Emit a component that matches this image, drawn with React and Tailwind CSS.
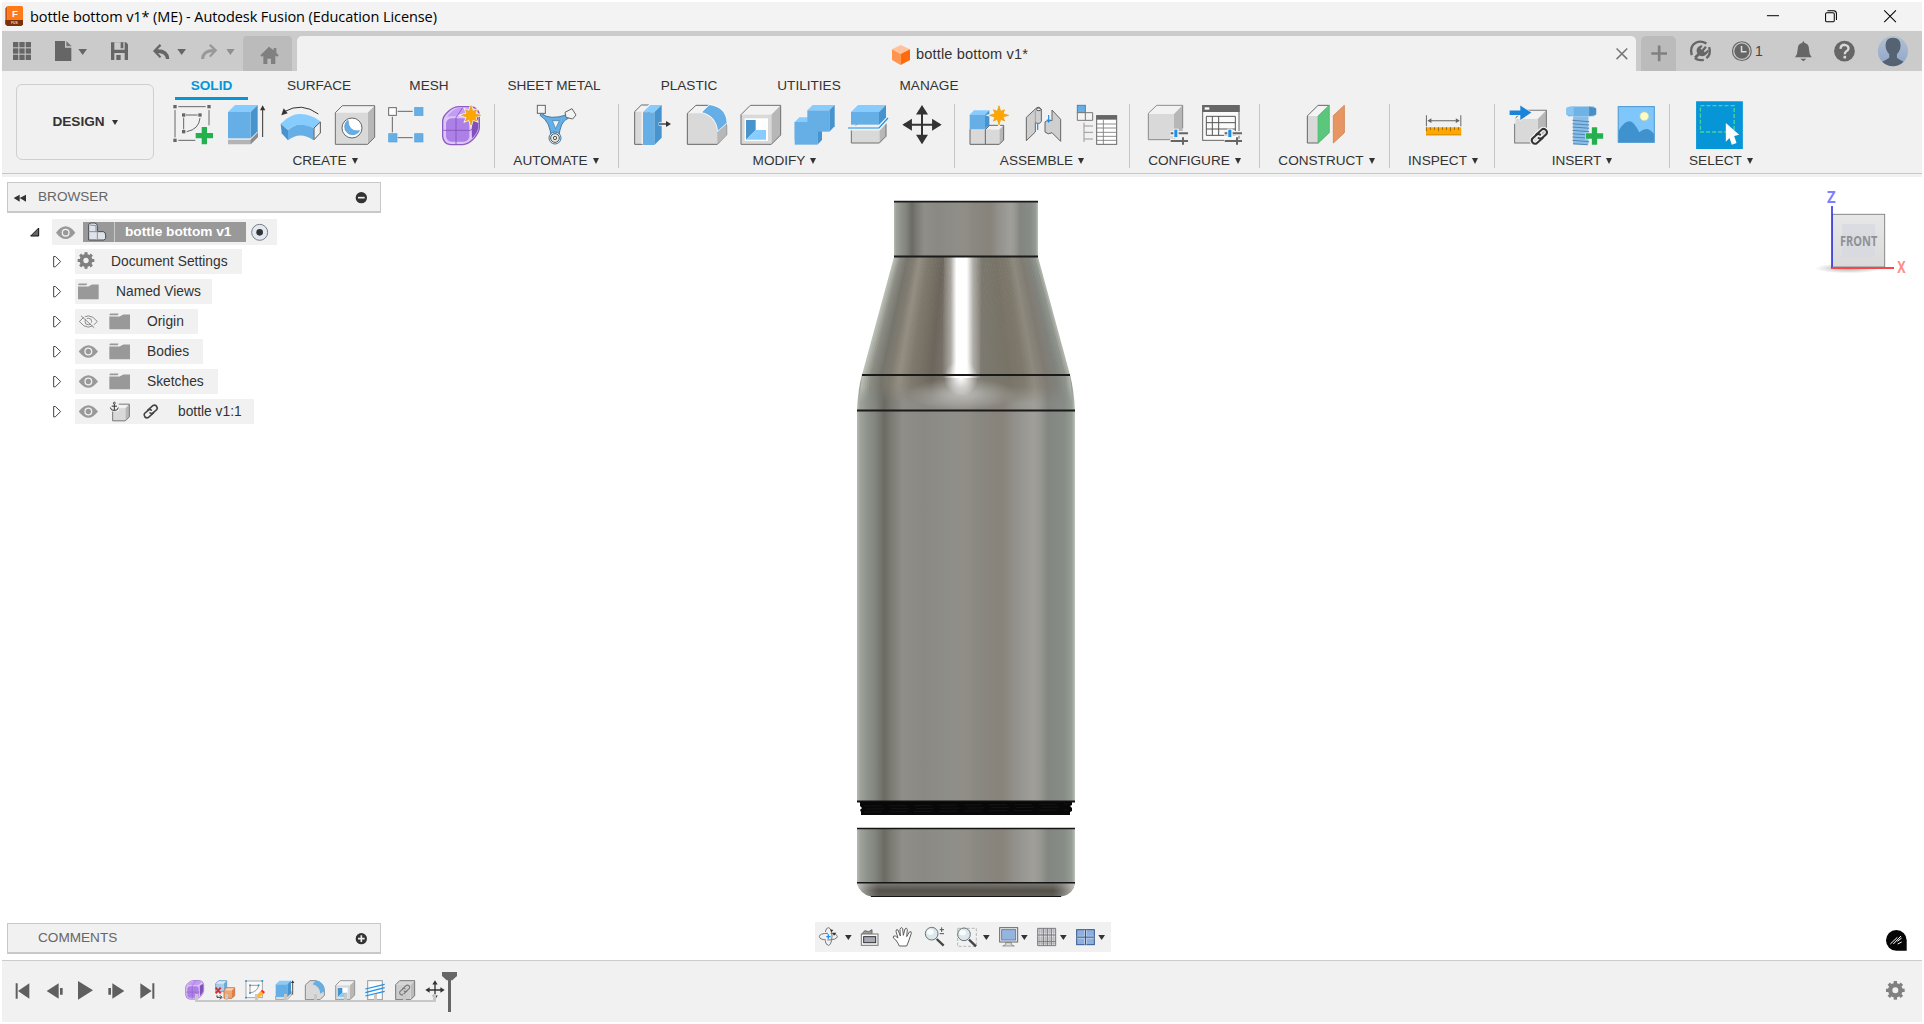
import React from "react";

// Drawing grids: [origin x, origin y, units per pixel]
const A = [0, 0, 3];
const B = [480, 60, 3];
const C = [940, 60, 3];
const D = [1400, 0, 2.9924];
const E = [0, 175, 3];
const G = [840, 780, 3];
const H = [0, 910, 3];
const I = [1780, 180, 3];
const J = [1820, 910, 3];
const K = [800, 910, 3];
const L = [870, 30, 3];

function Art({ g, x, y, w, h, className = "", children }) {
  const [ox, oy, s] = g;
  return (
    <svg width={w} height={h} viewBox={`${(x - ox) * s} ${(y - oy) * s} ${w * s} ${h * s}`} className={"block shrink-0 " + className} fill="none">
      {children}
    </svg>
  );
}

const BLUE = ["#65afe6", "#87ccff", "#4693cd"];
const GREY = ["#d9d9d9", "#f2f2f2", "#b7b7b7"];

// Oblique box: front face w x h, depth d
function Cube({ x, y, w, h, d, c = GREY, line, sw = 3 }) {
  return (
    <g strokeLinejoin="round">
      <path d={`M${x} ${y + d}L${x + d} ${y}H${x + w + d}L${x + w} ${y + d}Z`} fill={c[1]} />
      <path d={`M${x + w} ${y + d}L${x + w + d} ${y}V${y + h}L${x + w} ${y + h + d}Z`} fill={c[2]} />
      <path d={`M${x} ${y + d}h${w}v${h}h${-w}z`} fill={c[0]} />
      {line && <path d={`M${x} ${y + d}L${x + d} ${y}H${x + w + d}V${y + h}L${x + w} ${y + h + d}H${x}Z`} stroke={line} strokeWidth={sw} />}
    </g>
  );
}

function Star({ cx, cy, r }) {
  const pts = Array.from({ length: 16 }, (_, i) => {
    const a = (i * Math.PI) / 8 - Math.PI / 2;
    const q = i % 2 ? r * 0.45 : i % 4 ? r * 0.82 : r;
    return `${cx + q * Math.cos(a)},${cy + q * Math.sin(a)}`;
  }).join(" ");
  return (
    <g>
      <polygon points={pts} fill="#f4f1ea" stroke="#f4f1ea" strokeWidth="7" />
      <polygon points={pts} fill="#ffa600" stroke="#e59a10" strokeWidth="2" />
    </g>
  );
}

function Gear({ cx, cy, r, fill }) {
  return (
    <g>
      {Array.from({ length: 8 }, (_, i) => (
        <rect key={i} x={cx - r * 0.18} y={cy - r} width={r * 0.36} height={r * 0.5} fill={fill} transform={`rotate(${i * 45} ${cx} ${cy})`} />
      ))}
      <circle cx={cx} cy={cy} r={r * 0.55} stroke={fill} strokeWidth={r * 0.46} />
    </g>
  );
}

const Plus = ({ x, y }) => (
  <path d={`M${x - 8} ${y - 26}h16v18h18v16h-18v18h-16v-18h-18v-16h18z`} fill="#24b04f" stroke="#f5f5f5" strokeWidth="3" paintOrder="stroke" />
);

const Sq = ({ x, y, s = 10, f = "#666" }) => <rect x={x - s / 2} y={y - s / 2} width={s} height={s} fill={f} />;

const Chain = ({ x, y, s = 1, c = "#333", w = 6 }) => (
  <g transform={`translate(${x} ${y}) scale(${s}) rotate(-42)`} stroke={c} strokeWidth={w} strokeLinecap="round">
    <path d="M4 10H-20A10 10 0 0 1 -20 -9H-4A9 9 0 0 1 5 -2" />
    <path d="M-4 -10H20A10 10 0 0 1 20 9H4A9 9 0 0 1 -5 2" />
  </g>
);

const MoveArrows = ({ x, y, r, a, t }) => (
  <g fill="#333">
    <path d={`M${x} ${y - r + 5}V${y + r - 5}M${x - r + 5} ${y}H${x + r - 5}`} stroke="#333" strokeWidth={t} />
    {[0, 90, 180, 270].map((d) => (
      <path key={d} d={`M${x} ${y - r}l${a} ${a * 1.6}h${-2 * a}z`} transform={`rotate(${d} ${x} ${y})`} />
    ))}
  </g>
);

const Purple = ({ x, y, w }) => (
  <g transform={`translate(${x} ${y}) scale(${w / 110})`}>
    <path d="M0 42Q2 28 16 16Q32 2 46 1H84Q106 3 110 24V66Q108 80 92 98Q76 114 60 115H24Q2 112 0 90Z" fill="#dcc6f7" stroke="#8e5bc4" strokeWidth="4" />
    <path d="M12 32Q30 6 52 4H86Q98 8 90 20Q80 32 66 30H30Q18 30 12 32Z" fill="#c49cf5" />
    <path d="M86 34Q100 20 107 26V64Q104 80 88 96Z" fill="#8150b8" />
    <rect x="10" y="36" width="70" height="70" rx="16" fill="#ad80e8" />
    <path d="M2 72H84L108 50M40 114V34L60 4" stroke="#8153b8" strokeWidth="2.500" />
  </g>
);

const Caret = () => <span className="ml-[5px] inline-block h-0 w-0 border-x-[3.5px] border-t-[6px] border-x-transparent border-t-[#333]" />;

function Group({ w, pad, label, nudge = "", children }) {
  return (
    <div className={`flex h-full shrink-0 flex-col ${w}`}>
      <div className={`flex h-[48px] ${pad}`}>{children}</div>
      <div className={`mt-[1px] flex h-[22px] items-center justify-center text-[13.6px] text-[#333] ${nudge}`}>
        {label}
        <Caret />
      </div>
    </div>
  );
}

const Sep = () => <div className="mt-[3px] h-[64px] w-px shrink-0 bg-[#c6c6c6]" />;

function TopBar() {
  return (
    <div className="flex h-[40px] items-stretch bg-[#cbcbcb]">
      <Art g={A} x={2} y={31} w={42} h={40}>
        {[0, 1, 2].map((r) => [0, 1, 2].map((c) => <rect key={r + "" + c} x={39 + c * 19} y={126 + r * 19} width="16" height="16" fill="#666" />))}
      </Art>
      <Art g={A} x={44} y={31} w={54} h={40}>
        <path d="M165 123H195V143H214V183H165Z" fill="#666" />
        <path d="M199 123L215 139H199Z" fill="#777" />
        <path d="M235 147H261L248 165Z" fill="#666" />
      </Art>
      <Art g={A} x={98} y={31} w={42} h={40}>
        <path d="M333 127H378L384 133V180H333Z" fill="#666" />
        <path d="M343 127h31v22h-31zM343 159h31v21h-31z" fill="#cbcbcb" />
        <path d="M362 127h8v18h-8zM349 165h13v15h-13z" fill="#666" />
      </Art>
      <Art g={A} x={140} y={31} w={52} h={40}>
        <path d="M459 153L479 132L484 137L473 148Q506 148 508 177L498 177Q496 159 474 159L484 170L479 174Z" fill="#666" />
        <path d="M532 147H558L545 165Z" fill="#666" />
      </Art>
      <Art g={A} x={192} y={31} w={51} h={40}>
        <path d="M652 151L632 132L627 137L638 147Q605 148 603 177L612 177Q614 158 637 157L627 168L632 172Z" fill="#999" />
        <path d="M679 147H704L691 165Z" fill="#8f8f8f" />
      </Art>
      <div className="mt-[5px] h-[35px] w-[49px] rounded-t-[4px] bg-[#bbb]">
        <Art g={A} x={243} y={36} w={49} h={35}>
          <path d="M807 140L781 166L785 170L790 167V192H802V176H813V192H826V167L832 170L836 166L829 158V144H821V151Z" fill="#808080" />
        </Art>
      </div>
      <div className="ml-[5px] mt-[5px] flex h-[35px] w-[1339px] items-center rounded-t-[5px] bg-[#f1f1f1]">
        <Art g={L} x={890} y={36} w={24} h={35} className="ml-[593px]">
          <path d="M92 45L120 58L92 72L66 58Z" fill="#ffc29a" />
          <path d="M66 58L92 72V105L66 90Z" fill="#ff944d" />
          <path d="M120 58L92 72V105L120 90Z" fill="#ff6a0a" />
        </Art>
        <span className="ml-[2px] mt-[2px] text-[14.6px] tracking-[0.15px] text-[#333]">bottle bottom v1*</span>
        <Art g={D} x={1608} y={36} w={26} h={35} className="ml-auto mr-[2px]">
          <path d="M648 145L680 177M680 145L648 177" stroke="#777" strokeWidth="4.500" />
        </Art>
      </div>
      <div className="ml-[5px] mt-[5px] h-[35px] w-[35px] rounded-t-[5px] bg-[#bbb]">
        <Art g={D} x={1641} y={36} w={35} h={35}>
          <path d="M752 160H799M775.500 136V183" stroke="#808080" strokeWidth="8" />
        </Art>
      </div>
      <Art g={D} x={1676} y={31} w={46} h={40}>
        <path d="M873 165Q866 138 885 128Q900 120 917 130M925 141Q932 162 917 174M909 179Q893 182 882 174" stroke="#666" strokeWidth="7" />
        <path d="M880 170L890 160Q884 150 892 141L902 135L905 139L899 146L903 149L913 138L918 142L909 153L912 156L922 148L924 155L914 165Q904 171 896 166L886 176Z" fill="#666" />
      </Art>
      <Art g={D} x={1722} y={31} w={33} h={40}>
        <circle cx="1023" cy="153" r="28" stroke="#666" strokeWidth="3.500" />
        <circle cx="1023" cy="153" r="22.500" fill="#666" />
        <path d="M1022 138V155H1037" stroke="#ddd" strokeWidth="4.500" />
      </Art>
      <span className="mt-[12px] w-[30px] text-[14px] leading-[17px] text-[#444]">1</span>
      <Art g={D} x={1785} y={31} w={38} h={40}>
        <path d="M1207 123L1211 129Q1224 132 1224 148Q1224 162 1232 171H1182Q1190 162 1190 148Q1190 132 1203 129ZM1198 176H1216L1207 183Z" fill="#666" />
      </Art>
      <Art g={D} x={1823} y={31} w={43} h={40}>
        <circle cx="1330" cy="153" r="31" fill="#666" />
        <path d="M1318 146Q1319 134 1331 134Q1343 136 1342 146Q1340 152 1334 155Q1331 158 1331 162" stroke="#d8d8d8" strokeWidth="7" />
        <path d="M1327 167h8v8h-8z" fill="#d8d8d8" />
      </Art>
      <Art g={D} x={1866} y={31} w={56} h={40}>
        <defs>
          <linearGradient id="av" x1="0" y1="0" x2="0" y2="1"><stop stopColor="#b3c1cf" /><stop offset="1" stopColor="#8ea5cc" /></linearGradient>
          <clipPath id="avc"><circle cx="1475" cy="153" r="45" /></clipPath>
        </defs>
        <circle cx="1475" cy="153" r="45" fill="url(#av)" />
        <path clipPath="url(#avc)" d="M1453 135Q1454 113 1475 113Q1497 113 1498 135Q1498 152 1487 162V173Q1497 181 1510 186V200H1440V186Q1455 180 1464 173V162Q1453 152 1453 135Z" fill="#546272" />
      </Art>
    </div>
  );
}

const TABS = [
  ["SURFACE", "w-[144px]"],
  ["MESH", "w-[76px]"],
  ["SHEET METAL", "w-[174px]"],
  ["PLASTIC", "w-[96px]"],
  ["UTILITIES", "w-[144px]"],
  ["MANAGE", "w-[96px]"],
];

const Sliders = ({ x, y, bg = "#f1f1f1" }) => (
  <g>
    <path d={`M${x - 2} ${y}h58M${x - 2} ${y + 23}h58`} stroke={bg} strokeWidth="14" />
    <path d={`M${x} ${y}h52M${x} ${y + 23}h52`} stroke="#666" strokeWidth="6" />
    <path d={`M${x + 37} ${y + 12}v22`} stroke="#666" strokeWidth="6" />
    <rect x={x + 8} y={y - 14} width="16" height="28" fill={bg} />
    <rect x={x + 11} y={y - 11} width="9" height="22" fill="#1b90ea" />
  </g>
);

function Ribbon() {
  return (
    <div className="flex h-[106px] bg-[#f1f1f1]">
      <div className="mb-[3px] flex w-full border-b border-[#c8c8c8]">
        <div className="ml-[14px] mt-[13px] flex h-[76px] w-[138px] items-center justify-center rounded-[6px] border border-[#cfcfcf] text-[13.6px] font-bold text-[#333]">
          DESIGN
          <span className="ml-[7px] mt-[1px] inline-block h-0 w-0 border-x-[3.5px] border-t-[5.500px] border-x-transparent border-t-[#333]" />
        </div>
        <div className="flex flex-col">
          <div className="ml-[21px] flex h-[30px] text-[13.6px] text-[#333]">
            <div className="h-[29px] w-[73px] border-b-[3px] border-[#0696d7] pt-[5px] text-center font-bold leading-[20px] text-[#0696d7]">SOLID</div>
            {TABS.map(([t, w]) => (
              <div key={t} className={`-ml-px mr-px pt-[5px] text-center leading-[20px] ${w}`}>{t}</div>
            ))}
          </div>
          <div className="flex h-[72px]">
            <Group w="w-[340px]" pad="pl-[12px]" label="CREATE" nudge="pl-[2px]">
              <Art g={A} x={166} y={101} w={54} h={48}>
                <path d="M535 320H617M525 330V412M627 330V376M535 421H586M558 345H593M551 353V388M600 354Q597 388 560 395" stroke="#666" strokeWidth="3" />
                <Sq x={525} y={320} /><Sq x={627} y={320} /><Sq x={525} y={421} /><Sq x={551} y={345} /><Sq x={600} y={345} /><Sq x={551} y={395} />
                <Plus x={613} y={407} />
              </Art>
              <Art g={A} x={220} y={101} w={54} h={48}>
                <path d="M684 419H752L774 397V411L752 433H684Z" fill="#b4b4b4" />
                <path d="M752 419L774 397V411L752 433Z" fill="#8c8c8c" />
                <Cube x={684} y={315} w={68} h={79} d={21} c={BLUE} />
                <path d="M788 411V325" stroke="#333" strokeWidth="3" /><path d="M780 331L788 316L796 331Z" fill="#333" />
              </Art>
              <Art g={A} x={274} y={101} w={54} h={48}>
                <path d="M955 342Q905 305 853 335" stroke="#333" strokeWidth="3" /><path d="M844 346L851 325L863 340Z" fill="#333" />
                <path d="M842 371Q872 341 901 342Q934 343 961 364L941 385Q922 374 901 374Q878 374 864 391Z" fill="#87ccff" />
                <path d="M842 371L864 391V421L845 400Z" fill="#4693cd" />
                <path d="M864 391Q880 374 901 374Q924 374 941 385V421Q900 392 864 421Z" fill="#65afe6" />
                <path d="M942 384L961 366V399L942 419Z" fill="#f1f1f1" stroke="#555" strokeWidth="3" />
              </Art>
              <Art g={A} x={328} y={101} w={54} h={48}>
                <Cube x={1006} y={317} w={97} h={95} d={21} line="#707070" />
                <circle cx="1056" cy="384" r="30" fill="#fff" stroke="#666" strokeWidth="3" />
                <path d="M1044 361A24 24 0 1 0 1079 392Q1046 398 1044 361Z" fill="#65afe6" stroke="#4c95cf" strokeWidth="2" />
              </Art>
              <Art g={A} x={382} y={101} w={54} h={48}>
                <path d="M1193 334H1238M1177 350V397M1193 413H1238" stroke="#666" strokeWidth="3" />
                <rect x="1166" y="323" width="23" height="23" fill="#fff" stroke="#666" strokeWidth="3" />
                {[[1244, 322], [1166, 401], [1244, 401]].map(([x, y]) => <rect key={x + y} x={x} y={y} width="25" height="25" fill="#65afe6" stroke="#5ba2d8" strokeWidth="2" />)}
              </Art>
              <Art g={A} x={436} y={101} w={54} h={48}>
                <Purple x={1328} y={319} w={110} />
                <Star cx={1413} cy={346} r={29} />
              </Art>
            </Group>
            <Sep />
            <Group w="w-[123px]" pad="pl-[34px]" label="AUTOMATE" nudge="pr-[1px]">
              <Art g={B} x={529} y={101} w={54} h={48}>
                <path d="M184 160Q208 182 262 164L266 174Q238 184 237 236L213 236Q213 186 180 166Z" fill="#65afe6" stroke="#4379a5" strokeWidth="3" />
                <path d="M217 182H238L227 206Z" fill="#f1f1f1" stroke="#4379a5" strokeWidth="2" />
                <rect x="172" y="136" width="24" height="24" fill="#f4f4f4" stroke="#666" strokeWidth="3" />
                <path d="M255 157L276 146L288 165L278 177L258 172Z" fill="#f4f4f4" stroke="#666" strokeWidth="3" />
                <circle cx="225" cy="234" r="18" fill="#e8e8e8" stroke="#4379a5" strokeWidth="3" /><circle cx="225" cy="234" r="13" stroke="#555" strokeWidth="3" /><circle cx="225" cy="234" r="5" stroke="#555" strokeWidth="3" />
              </Art>
            </Group>
            <Sep />
            <Group w="w-[335px]" pad="pl-[7px]" label="MODIFY" nudge="pr-[4px]">
              <Art g={B} x={626} y={101} w={54} h={48}>
                <Cube x={464} y={135} w={23} h={98} d={20} line="#666" />
                <path d="M487 252V156L510 134" stroke="#f1f1f1" strokeWidth="5" />
                <Cube x={489} y={135} w={34} h={98} d={22} c={BLUE} />
                <path d="M536 192H562" stroke="#f1f1f1" strokeWidth="10" /><path d="M537 192H562" stroke="#333" strokeWidth="4" /><path d="M558 183L573 192L558 201Z" fill="#333" />
              </Art>
              <Art g={B} x={680} y={101} w={54} h={48}>
                <path d="M622 160L648 136H690Q740 145 740 198V224L712 253H622Z" fill="#d9d9d9" stroke="#666" strokeWidth="3" />
                <path d="M624 160L648 138H688L666 160Z" fill="#f2f2f2" />
                <path d="M712 253V211L740 190V224Z" fill="#b7b7b7" />
                <path d="M666 157L688 135Q738 142 740 188L714 212Q708 168 666 157Z" fill="#65afe6" stroke="#fff" strokeWidth="4" paintOrder="stroke" />
              </Art>
              <Art g={B} x={734} y={101} w={54} h={48}>
                <Cube x={783} y={136} w={91} h={89} d={28} line="#707070" />
                <rect x="794" y="175" width="70" height="68" fill="#fff" />
                <path d="M798 180H827V210L798 239Z" fill="#4693cd" /><path d="M827 210H858V239H798Z" fill="#87ccff" />
              </Art>
              <Art g={B} x={788} y={101} w={54} h={48}>
                <Cube x={944} y={172} w={68} h={68} d={14} c={BLUE} />
                <Cube x={982} y={135} w={66} h={64} d={16} c={BLUE} />
                <path d="M944 186H984V200H1010V240H944Z" fill="#65afe6" />
              </Art>
              <Art g={B} x={842} y={101} w={54} h={48}>
                <Cube x={1114} y={190} w={84} h={39} d={20} line="#707070" />
                <path d="M1108 204H1196L1224 174" stroke="#f1f1f1" strokeWidth="15" />
                <Cube x={1113} y={135} w={84} h={38} d={21} c={BLUE} />
                <path d="M1104 204H1197L1224 174" stroke="#f1f1f1" strokeWidth="9" />
                <path d="M1104 204H1197L1224 174" stroke="#1b90ea" strokeWidth="3.500" />
              </Art>
              <Art g={B} x={896} y={101} w={54} h={48}>
                <MoveArrows x={1326} y={194} r={59} a={18} t={6} />
              </Art>
            </Group>
            <Sep />
            <Group w="w-[174px]" pad="pl-[6px]" label="ASSEMBLE">
              <Art g={C} x={961} y={101} w={54} h={48}>
                <Cube x={90} y={196} w={46} h={44} d={13} line="#666" />
                <Cube x={136} y={196} w={42} h={44} d={13} line="#666" />
                <Cube x={89} y={151} w={46} h={44} d={13} c={BLUE} />
                <Star cx={177} cy={166} r={29} />
              </Art>
              <Art g={C} x={1015} y={101} w={54} h={48}>
                <path d="M259 172L286 147Q296 136 304 148V184Q300 194 286 188V216L259 242Z" fill="#cfcfcf" stroke="#666" strokeWidth="3" strokeLinejoin="round" />
                <path d="M286 152V186" stroke="#888" strokeWidth="2" /><ellipse cx="296" cy="148" rx="7" ry="4" stroke="#555" strokeWidth="3" fill="#eee" />
                <path d="M336 150L362 178V244L336 218Q324 226 315 216V186Q322 178 336 182Z" fill="#cfcfcf" stroke="#666" strokeWidth="3" strokeLinejoin="round" />
                <path d="M293 190V210M326 165V184M321 179l5 7 5-7" stroke="#1b90ea" strokeWidth="3.500" />
              </Art>
              <Art g={C} x={1069} y={101} w={58} h={48}>
                <rect x="412" y="136" width="24" height="22" fill="#65afe6" stroke="#5a7f9d" strokeWidth="3" />
                <path d="M412 158H458V181H412ZM436 158V181" fill="#f4f4f4" stroke="#777" strokeWidth="3" />
                <path d="M432 188V246M432 198H459M432 217H459M432 237H459" stroke="#999" strokeWidth="3" />
                <rect x="470" y="167" width="60" height="86" fill="#fff" stroke="#666" strokeWidth="3" /><rect x="469" y="166" width="62" height="13" fill="#666" />
                <path d="M470 192H530M470 204H530M470 217H530M470 229H530M470 241H530M490 179V253" stroke="#777" strokeWidth="2.500" />
              </Art>
            </Group>
            <Sep />
            <Group w="w-[129px]" pad="pl-[10px]" label="CONFIGURE">
              <Art g={C} x={1140} y={101} w={54} h={48}>
                <Cube x={625} y={136} w={77} h={77} d={26} />
                <path d="M702 239H625V160L650 136H728V205" stroke="#777" strokeWidth="2.500" />
                <Sliders x={692} y={220} />
              </Art>
              <Art g={C} x={1194} y={101} w={54} h={48}>
                <rect x="788" y="137" width="109" height="104" fill="#fafafa" stroke="#666" strokeWidth="3" /><rect x="787" y="135" width="112" height="21" fill="#666" /><rect x="794" y="142" width="14" height="7" fill="#fff" />
                <path d="M799 169H886V226H799ZM799 188H886M799 207H886M817 169V226M836 169V226" stroke="#555" strokeWidth="3" />
                <Sliders x={854} y={220} />
              </Art>
            </Group>
            <Sep />
            <Group w="w-[129px]" pad="pl-[39px]" label="CONSTRUCT" nudge="pl-[4px]">
              <Art g={C} x={1299} y={101} w={54} h={48}>
                <path d="M1102 168L1134 136H1166V218L1134 249H1102Z" fill="#d9d9d9" stroke="#666" strokeWidth="3" />
                <path d="M1104 168L1135 138H1164L1134 168Z" fill="#f4f4f4" />
                <path d="M1134 168L1168 135V218L1134 250Z" fill="#5cc67c" stroke="#46b96b" strokeWidth="2" />
                <path d="M1180 167L1213 136V218L1180 249Z" fill="#e79562" stroke="#d48c5a" strokeWidth="3" />
              </Art>
            </Group>
            <Sep />
            <Group w="w-[104px]" pad="pl-[27px]" label="INSPECT" nudge="pl-[2px]">
              <Art g={D} x={1417} y={101} w={54} h={48}>
                <path d="M79 345V378M182 345V378M86 361H175" stroke="#666" strokeWidth="3" /><path d="M82 361L94 354V368ZM179 361L167 354V368Z" fill="#666" />
                <rect x="78" y="381" width="105" height="24" fill="#ffa600" /><path d="M79 381V393M91 381V389M103 381V389M115 381V393M127 381V389M139 381V389M151 381V393M163 381V389M175 381V389" stroke="#9b6c16" strokeWidth="3" /><path d="M78 403H183" stroke="#d98e00" strokeWidth="3" />
              </Art>
            </Group>
            <Sep />
            <Group w="w-[174px]" pad="pl-[7px]" label="INSERT">
              <Art g={D} x={1502} y={101} w={54} h={48}>
                <Cube x={343} y={330} w={69} h={72} d={26} line="#777" />
                <path d="M343 370V345L362 330" stroke="#f1f1f1" strokeWidth="6" />
                <path d="M328 331H360V316L393 337L360 359V344H328Z" fill="#1c84d8" stroke="#f1f1f1" strokeWidth="4" paintOrder="stroke" />
                <Chain x={417} y={408} s={1.02} c="#f1f1f1" w={13} /><Chain x={417} y={408} s={1.02} w={6} />
              </Art>
              <Art g={D} x={1556} y={101} w={54} h={48}>
                <path d="M498 325Q504 319 510 319H579L587 325V343L580 348H504L498 343Z" fill="#6fb3e6" /><path d="M498 322L520 319V348L498 343Z" fill="#87c5f4" /><path d="M566 319L587 325V343L566 348Z" fill="#4a8ec6" />
                <rect x="518" y="348" width="46" height="84" fill="#87bfea" /><path d="M516 360L566 364M516 370L566 374M516 380L566 384M516 390L566 394M516 400L566 404M516 410L566 414M516 420L566 424M518 430L562 433" stroke="#5486b0" strokeWidth="3" />
                <Plus x={582} y={407} />
              </Art>
              <Art g={D} x={1610} y={101} w={54} h={48}>
                <rect x="653" y="319" width="108" height="107" fill="#7fc6fb" stroke="#4a97d3" strokeWidth="3" />
                <circle cx="731" cy="348" r="13" fill="#fffbc4" stroke="#cdd9a0" strokeWidth="2" />
                <path d="M654 391Q672 362 688 363Q700 364 716 396Q728 386 738 386Q748 386 760 400V425H654Z" fill="#3f92ce" />
              </Art>
            </Group>
            <Sep />
            <Group w="w-[102px]" pad="pl-[22px]" label="SELECT">
              <Art g={D} x={1692} y={101} w={54} h={48}>
                <rect x="886" y="303" width="140" height="143" fill="#0696d7" />
                <rect x="899" y="316" width="101" height="79" stroke="#4cd29b" strokeWidth="4" strokeDasharray="12 6" />
                <path d="M975 368L1015 403L1000 407L1007 428L993 433L986 413L975 424Z" fill="#fff" />
              </Art>
            </Group>
          </div>
        </div>
      </div>
    </div>
  );
}

const EyeIcon = ({ cx, cy, c = "#999" }) => (
  <g>
    <path d={`M${cx - 29} ${cy}Q${cx - 14} ${cy - 19} ${cx} ${cy - 19}Q${cx + 14} ${cy - 19} ${cx + 29} ${cy}Q${cx + 14} ${cy + 19} ${cx} ${cy + 19}Q${cx - 14} ${cy + 19} ${cx - 29} ${cy}Z`} fill={c} />
    <circle cx={cx} cy={cy} r="10" stroke="#f1f1f1" strokeWidth="4" />
  </g>
);

const HiddenEye = ({ cx, cy }) => (
  <g stroke="#8c8c8c" strokeWidth="3">
    <path d={`M${cx - 27} ${cy}Q${cx} ${cy - 34} ${cx + 27} ${cy}Q${cx} ${cy + 34} ${cx - 27} ${cy}Z`} />
    <circle cx={cx} cy={cy} r="10" />
    <path d={`M${cx - 20} ${cy - 20}L${cx + 20} ${cy + 16}`} stroke="#f1f1f1" strokeWidth="4" />
    <path d={`M${cx - 22} ${cy - 17}L${cx + 18} ${cy + 19}`} />
  </g>
);

const Folder = ({ x, cy }) => (
  <path d={`M${x} ${cy - 15}H${x + 31}L${x + 42} ${cy - 21}H${x + 62}V${cy + 23}H${x}ZM${x + 2} ${cy - 24}H${x + 28}L${x + 25} ${cy - 19}H${x}Z`} fill="#999" />
);

const ROWS = [
  { label: "Document Settings", w: "w-[167px]", icon: "gear", iw: 26 },
  { label: "Named Views", w: "w-[137px]", icon: "folder", iw: 31 },
  { label: "Origin", w: "w-[123px]", icon: "hidden", iw: 62 },
  { label: "Bodies", w: "w-[128px]", icon: "eye", iw: 62 },
  { label: "Sketches", w: "w-[143px]", icon: "eye", iw: 62 },
  { label: "bottle v1:1", w: "w-[179px]", icon: "linked", iw: 93 },
];

function Browser() {
  return (
    <div>
      <div className="ml-[5px] mt-[5px] flex h-[31px] w-[374px] items-center border border-b-2 border-[#c8c8c8] bg-[#f1f1f1]">
        <Art g={E} x={8} y={183} w={30} h={28}>
          <path d="M41 69L59 59V80ZM59 69L78 59V80Z" fill="#333" />
        </Art>
        <span className="text-[13.6px] text-[#666]">BROWSER</span>
        <Art g={E} x={350} y={183} w={30} h={28} className="ml-auto">
          <circle cx="1084" cy="68" r="17" fill="#333" /><path d="M1074 68H1094" stroke="#eee" strokeWidth="5" />
        </Art>
      </div>
      <div className="mt-[6px] flex h-[26px] items-stretch">
        <Art g={E} x={22} y={219} w={30} h={26} className="ml-[20px]">
          <path d="M92 183L116 159V183Z" fill="#666" stroke="#111" strokeWidth="3" />
        </Art>
        <div className="flex w-[225px] items-center bg-[#f1f1f1]">
          <Art g={E} x={52} y={219} w={31} h={25}><EyeIcon cx={197} cy={170} /></Art>
          <div className="flex h-[20px] w-[163px] items-center bg-[#999]">
            <Art g={E} x={83} y={222} w={31} h={20}>
              <g fill="#dfe3ea" stroke="#454a55" strokeWidth="3"><path d="M266 150Q266 144 274 144H284Q293 146 292 154V170H310Q317 172 317 180V190L312 195H266Z" /><path d="M266 170H292V195M288 170V152L270 150" stroke="#8890a0" /></g>
            </Art>
            <div className="h-full w-px bg-[#c9c9c9]" />
            <span className="ml-[10px] mt-[1px] text-[13.7px] font-bold text-white">bottle bottom v1</span>
          </div>
          <Art g={E} x={246} y={219} w={30} h={25}>
            <circle cx="779" cy="169" r="24" fill="#e2e9f4" stroke="#666" strokeWidth="2.500" /><circle cx="779" cy="169" r="10" fill="#333" />
          </Art>
        </div>
      </div>
      <div className="mt-[4px] flex flex-col gap-[5px]">
        {ROWS.map((r, i) => {
          const y = 249.5 + i * 30;
          const cy = 261 + i * 90;
          return (
            <div key={r.label} className="flex h-[25px] items-center">
              <Art g={E} x={47} y={y} w={28} h={25} className="ml-[45px]">
                <path d={`M161 ${cy - 15}V${cy + 16}L166 ${cy + 16}L182 ${cy}L166 ${cy - 15}Z`} fill="#fff" stroke="#444" strokeWidth="3" />
              </Art>
              <div className={`flex h-[25px] shrink-0 items-center bg-[#f1f1f1] ${r.w}`}>
                <Art g={E} x={75} y={y} w={r.iw} h={25}>
                  {r.icon === "gear" && <Gear cx={258} cy={258} r={25} fill="#808080" />}
                  {r.icon === "folder" && <Folder x={234} cy={cy} />}
                  {r.icon === "hidden" && <HiddenEye cx={265} cy={cy} />}
                  {(r.icon === "eye" || r.icon === "linked") && <EyeIcon cx={265} cy={cy} />}
                  {(r.icon === "eye" || r.icon === "hidden") && <Folder x={328} cy={cy} />}
                  {r.icon === "linked" && (
                    <g>
                      <Cube x={338} y={cy - 22} w={38} h={38} d={12} line="#777" />
                      <path d={`M328 ${cy - 34}h28v34h-28z`} fill="#f1f1f1" />
                      <path d={`M343 ${cy - 22}V${cy - 4}M335 ${cy - 16}H351M331 ${cy - 12}Q332 ${cy - 3} 343 ${cy - 3}Q354 ${cy - 3} 355 ${cy - 12}`} stroke="#333" strokeWidth="3" />
                      <circle cx="343" cy={cy - 25} r="3" stroke="#333" strokeWidth="2.500" />
                      <Chain x={452} y={cy} s={0.88} c="#444" w={5.5} />
                    </g>
                  )}
                </Art>
                <span className="mt-[1px] pl-[10px] text-[13.8px] text-[#333]">{r.label}</span>
              </div>
            </div>
          );
        })}
      </div>
    </div>
  );
}

const BODY = [[0, "#b5bbb0"], [0.015, "#9da39a"], [0.05, "#8c9189"], [0.08, "#84867f"], [0.125, "#6b6b64"], [0.16, "#7c7c76"], [0.21, "#8f8e88"], [0.3, "#8a8983"], [0.44, "#8f8f89"], [0.51, "#918d85"], [0.55, "#898881"], [0.67, "#88837b"], [0.72, "#92908a"], [0.81, "#a09f99"], [0.84, "#989892"], [0.875, "#838681"], [0.95, "#878d86"], [0.985, "#969d95"], [1, "#bbc1b6"]];
const CONE = [[0, 185, 190, 180], [0.04, 140, 141, 133], [0.09, 118, 117, 109], [0.13, 128, 123, 112], [0.175, 148, 142, 131], [0.23, 128, 122, 110], [0.33, 108, 102, 92], [0.42, 128, 124, 116], [0.5, 140, 136, 128], [0.58, 124, 121, 112], [0.7, 120, 115, 102], [0.77, 126, 121, 108], [0.82, 142, 137, 126], [0.88, 128, 123, 114], [0.93, 128, 131, 125], [0.97, 142, 148, 140], [1, 190, 195, 185]];

function shade(u) {
  let i = 1;
  while (i < CONE.length - 1 && CONE[i][0] < u) i++;
  const a = CONE[i - 1], b = CONE[i];
  const t = (u - a[0]) / (b[0] - a[0]);
  return `rgb(${[1, 2, 3].map((k) => Math.round(a[k] + (b[k] - a[k]) * t)).join(",")})`;
}

function Bottle() {
  const n = 100;
  const stops = BODY.map(([o, c]) => <stop key={o} offset={o} stopColor={c} />);
  return (
    <svg width="220" height="698" viewBox="856 200 220 698" className="ml-[41px] mt-[23px] block shrink-0">
      <defs>
        <linearGradient id="body">{stops}</linearGradient>
        <linearGradient id="hot">
          <stop offset="0" stopColor="#fff" stopOpacity="0" /><stop offset=".22" stopColor="#fff" stopOpacity=".35" /><stop offset=".36" stopColor="#fff" /><stop offset=".62" stopColor="#fff" /><stop offset=".78" stopColor="#fff" stopOpacity=".35" /><stop offset="1" stopColor="#fff" stopOpacity="0" />
        </linearGradient>
        <linearGradient id="fade" x1="0" y1="0" x2="0" y2="1"><stop stopColor="#fff" /><stop offset=".35" stopColor="#fff" stopOpacity=".9" /><stop offset=".8" stopColor="#fff" stopOpacity="0" /></linearGradient>
        <mask id="fm"><rect x="850" y="374" width="230" height="36" fill="url(#fade)" /></mask>
        <radialGradient id="glow"><stop stopColor="#fff" /><stop offset=".3" stopColor="#fff" stopOpacity=".75" /><stop offset="1" stopColor="#fff" stopOpacity="0" /></radialGradient>
        <linearGradient id="base" x1="0" y1="0" x2="0" y2="1"><stop stopColor="#7b7973" /><stop offset=".55" stopColor="#55524b" /><stop offset="1" stopColor="#625e57" /></linearGradient>
        <linearGradient id="rim"><stop stopColor="#d0d0c8" stopOpacity=".9" /><stop offset=".1" stopColor="#999" stopOpacity="0" /><stop offset=".9" stopColor="#999" stopOpacity="0" /><stop offset="1" stopColor="#d0d0c8" stopOpacity=".9" /></linearGradient>
      </defs>
      <rect x="894" y="202" width="144" height="55" fill="url(#body)" />
      {Array.from({ length: n }, (_, i) => {
        const a = i / n, b = Math.min(1, (i + 1.4) / n);
        return <path key={i} d={`M${894 + 144 * a} 257H${894 + 144 * b}L${862 + 208 * b} 375H${862 + 208 * a}Z`} fill={shade(i / n)} />;
      })}
      <path d="M862 375H1070Q1074 390 1075 410H857Q858 388 862 375Z" fill="url(#body)" />
      <g mask="url(#fm)">
        {Array.from({ length: n }, (_, i) => {
          const a = i / n, b = Math.min(1, (i + 1.4) / n);
          return <path key={i} d={`M${862 + 208 * a} 375H${862 + 208 * b}L${858 + 216 * b} 410H${858 + 216 * a}Z`} fill={shade(i / n)} />;
        })}
      </g>
      <path d="M944 257H982L980 378H942Z" fill="url(#hot)" />
      <ellipse cx="961" cy="378" rx="17" ry="18" fill="url(#glow)" />
      <ellipse cx="962" cy="394" rx="55" ry="16" fill="url(#glow)" opacity=".4" />
      <rect x="857" y="410" width="218" height="392" fill="url(#body)" />
      <path d="M894 201.700H1038M894 256.500H1038M862 375H1070M857 410.500H1075" stroke="#1a1a1a" strokeWidth="1.800" />
      <path d="M857 801.500H1075" stroke="#111" strokeWidth="2" />
      <path d="M860 802H1072V805L1070 806L1072 808V811L1070 812V815H861V812L860 810L862 808L860 806Z" fill="#080808" />
      <path d="M864 806L1068 804M866 809L1066 807M864 812L1068 810" stroke="#252525" strokeWidth=".4" strokeDasharray="18 7" />
      <rect x="857" y="828" width="218" height="55" fill="url(#body)" />
      <path d="M857 883H1075Q1073 895 1061 896.500H871Q860 894 857 883Z" fill="url(#base)" />
      <path d="M857 883H1075Q1073 895 1061 896.500H871Q860 894 857 883Z" fill="url(#rim)" />
      <path d="M857 828.500H1075M857 882.700H1075" stroke="#151515" strokeWidth="1.600" />
      <path d="M871 896.500H1061" stroke="#151515" strokeWidth="1.200" />
    </svg>
  );
}

const Lens = ({ x, y }) => (
  <g>
    <path d={`M${x + 15} ${y + 16}L${x + 36} ${y + 36}`} stroke="#444" strokeWidth="7" />
    <circle cx={x} cy={y} r="19" fill="#dce9ec" stroke="#6b7478" strokeWidth="3" />
    <ellipse cx={x - 4} cy={y - 5} rx="10" ry="8" fill="#f8fcfc" />
  </g>
);

const Tri = ({ x }) => <path d={`M${x - 10} 465H${x + 10}L${x} 480Z`} fill="#333" />;

function NavBar() {
  return (
    <div className="mt-[24px] flex h-[30px] w-[296px] bg-[#f1f1f1]">
      <Art g={K} x={815} y={922} w={42} h={30}>
        <path d="M78 90Q58 88 58 80Q58 70 84 70M92 70Q112 72 112 80Q110 90 82 90" stroke="#777" strokeWidth="3" />
        <path d="M76 66Q78 53 85 53Q96 55 96 80Q94 106 85 106Q76 104 76 92" stroke="#777" strokeWidth="3" />
        <path d="M85 73V86M79 80H92" stroke="#1b90ea" strokeWidth="4" /><path d="M90 58l10 2-6 7zM97 68l12 0-7 9z" fill="#333" />
        <path d="M135 75H155L145 90Z" fill="#333" />
      </Art>
      <Art g={G} x={857} y={922} w={32} h={30}>
        <path d="M66 462L74 452L86 455L96 449V462" fill="#999" stroke="#555" strokeWidth="2.500" /><rect x="64" y="462" width="50" height="34" fill="#f6f6f6" stroke="#777" strokeWidth="3" /><rect x="71" y="470" width="36" height="18" fill="#a4a9b3" stroke="#333" strokeWidth="3" />
      </Art>
      <Art g={G} x={889} y={922} w={32} h={30}>
        <path d="M174 490Q168 478 160 474Q158 466 166 468L174 474L168 454Q168 446 174 450L181 468L180 448Q184 438 188 446L190 466L195 447Q200 441 202 449L200 470L208 456Q215 452 214 460L205 486L200 498H178Z" fill="#fff" stroke="#555" strokeWidth="2.800" strokeLinejoin="round" />
      </Art>
      <Art g={G} x={921} y={922} w={32} h={30}>
        <Lens x={275} y={461} /><path d="M299 449H312M305 442V456M299 461H312" stroke="#555" strokeWidth="3" />
      </Art>
      <Art g={G} x={953} y={922} w={42} h={30}>
        <rect x="353" y="445" width="56" height="54" stroke="#999" strokeWidth="2" strokeDasharray="9 5" /><Lens x={372} y={463} /><Tri x={439} />
      </Art>
      <Art g={G} x={995} y={922} w={36} h={30}>
        <path d="M497 488h17v6l9 4h-35l9-4z" fill="#ddd" stroke="#777" strokeWidth="2" /><rect x="479" y="443" width="54" height="43" fill="#eee" stroke="#666" strokeWidth="3" /><rect x="485" y="449" width="42" height="31" fill="#94b5df" stroke="#5376a8" strokeWidth="2.500" /><Tri x={553} />
      </Art>
      <Art g={G} x={1031} y={922} w={39} h={30}>
        <rect x="593" y="445" width="54" height="52" fill="#e2e2e4" /><path d="M593 450H647M593 456H647M593 474H647M593 480H647M593 491H647M598 445V497M604 445V497M616 445V497M628 445V497M641 445V497" stroke="#999" strokeWidth="1.500" /><path d="M593 445H647V497H593ZM593 465H647M593 485H647M610 445V497M622 445V497M634 445V497" stroke="#667" strokeWidth="2.500" /><Tri x={670} />
      </Art>
      <Art g={G} x={1070} y={922} w={41} h={30}>
        <rect x="710" y="449" width="53" height="45" fill="#8fb0dd" stroke="#35598f" strokeWidth="3" /><path d="M736.500 449V494M710 471.500H763" stroke="#fff" strokeWidth="9" opacity=".35" /><path d="M736.500 449V494M710 471.500H763" stroke="#35598f" strokeWidth="3" /><Tri x={785} />
      </Art>
    </div>
  );
}

function ViewCube() {
  return (
    <Art g={I} x={1780} y={180} w={142} h={110} className="ml-auto mt-[3px]">
      <defs>
        <linearGradient id="vc" x1="0" y1="0" x2="0" y2="1"><stop stopColor="#e7e7e7" /><stop offset="1" stopColor="#dadada" /></linearGradient>
        <radialGradient id="vs"><stop stopColor="#888" stopOpacity=".7" /><stop offset="1" stopColor="#888" stopOpacity="0" /></radialGradient>
      </defs>
      <ellipse cx="205" cy="265" rx="100" ry="15" fill="url(#vs)" />
      <rect x="157" y="103" width="157" height="158" fill="url(#vc)" stroke="#888" strokeWidth="3" />
      <rect x="186" y="132" width="99" height="99" fill="#d6d9df" opacity=".7" />
      <path d="M156 78V266" stroke="#3a3ae6" strokeWidth="5" /><path d="M156 264H342" stroke="#f24848" strokeWidth="6" />
      <text x="236" y="198" textAnchor="middle" textLength="112" lengthAdjust="spacingAndGlyphs" fontSize="45" fontWeight="700" fontFamily="Open Sans, Noto Sans, sans-serif" fill="#8e9196">FRONT</text>
      <text x="141" y="69" fontSize="46" fontWeight="700" textLength="26" lengthAdjust="spacingAndGlyphs" fontFamily="Open Sans, sans-serif" fill="#8080ff">Z</text>
      <text x="352" y="279" fontSize="46" fontWeight="700" textLength="25" lengthAdjust="spacingAndGlyphs" fontFamily="Open Sans, sans-serif" fill="#ff8c8c">X</text>
    </Art>
  );
}

function Timeline() {
  return (
    <div className="flex h-[62px] border-t border-[#ccc] bg-[#f1f1f1]">
      <Art g={H} x={2} y={961} w={40} h={61}><path d="M47 220h6v46h-6zM88 220V266L54 243Z" fill="#5f5f5f" /></Art>
      <Art g={H} x={42} y={961} w={30} h={61}><path d="M140 243L176 220V266ZM180 234h8v20h-8z" fill="#5f5f5f" /></Art>
      <Art g={H} x={72} y={961} w={30} h={61}><path d="M234 213L279 241L234 269Z" fill="#5f5f5f" /></Art>
      <Art g={H} x={102} y={961} w={30} h={61}><path d="M373 243L337 220V266ZM325 234h8v20h-8z" fill="#5f5f5f" /></Art>
      <Art g={H} x={132} y={961} w={46} h={61}><path d="M421 220V266L455 243ZM457 220h6v46h-6z" fill="#5f5f5f" /></Art>
      <div className="flex w-[284px] flex-col">
        <div className="flex h-[41px]">
          <Art g={H} x={178} y={961} w={32} h={41}><Purple x={557} y={211} w={54} /></Art>
          <Art g={H} x={210} y={961} w={30} h={41}>
            <Cube x={647} y={212} w={24} h={24} d={9} c={["#a9cde8", "#d2eafc", "#72a8d2"]} line="#5b9ac9" sw={2.5} />
            <Cube x={672} y={233} w={24} h={24} d={8} c={["#f0a46f", "#ffd0b0", "#d8834c"]} line="#c46f3b" sw={2.5} />
            <path d="M647 233L662 250M662 233L647 250" stroke="#dd2b2b" strokeWidth="6" /><path d="M651 256V262H664M660 256l6 6-6 6" stroke="#333" strokeWidth="3" />
          </Art>
          <Art g={H} x={240} y={961} w={30} h={41}>
            <rect x="738" y="213" width="49" height="50" fill="#fafafa" stroke="#999" strokeWidth="2.500" />
            <path d="M750 226H776Q774 244 750 249Z" stroke="#888" strokeWidth="2.500" />
            {[[738, 213], [787, 213], [738, 263], [750, 226], [776, 226], [750, 249]].map(([x, y]) => <Sq key={x + "-" + y} x={x} y={y} s={5} f="#1b90ea" />)}
            <path d="M765 268L768 257L783 242L792 250L777 264Z" fill="#ffb733" /><path d="M782 243L787 239L795 246L791 251Z" fill="#e33" />
          </Art>
          <Art g={H} x={270} y={961} w={30} h={41}>
            <path d="M827 258V269H861L874 256V244" fill="#ddd" stroke="#888" strokeWidth="2" />
            <Cube x={827} y={212} w={35} h={38} d={11} c={BLUE} /><path d="M878 254V218" stroke="#333" strokeWidth="2.500" /><path d="M873 219L878 211L883 219Z" fill="#333" />
          </Art>
          <Art g={H} x={300} y={961} w={30} h={41}>
            <path d="M916 225L930 212H947Q973 218 973 243V256L960 269H916Z" fill="#d9d9d9" stroke="#888" strokeWidth="3" /><path d="M938 223L948 211Q973 217 974 243L961 251Q959 228 938 223Z" fill="#65afe6" />
          </Art>
          <Art g={H} x={330} y={961} w={30} h={41}>
            <Cube x={1007} y={212} w={43} h={43} d={14} line="#888" sw={2.5} /><rect x="1012" y="233" width="31" height="30" fill="#fff" /><path d="M1013 234H1027V248L1013 262Z" fill="#4693cd" /><path d="M1027 248H1042V262H1013Z" fill="#87ccff" />
          </Art>
          <Art g={H} x={360} y={961} w={30} h={41}>
            <rect x="1103" y="212" width="44" height="57" fill="#fafafa" stroke="#999" strokeWidth="3" /><path d="M1096 237L1154 223M1096 248L1154 233M1096 258L1154 244" stroke="#1b90ea" strokeWidth="3.500" />
          </Art>
          <Art g={H} x={390} y={961} w={30} h={41}>
            <Cube x={1187} y={212} w={45} h={45} d={12} line="#777" c={["#cdcdcd", "#d5d5d5", "#bbb"]} /><Chain x={1214} y={240} s={0.68} c="#777" w={5} />
          </Art>
          <Art g={H} x={420} y={961} w={42} h={41} className="overflow-visible">
            <MoveArrows x={1305} y={240} r={29} a={8} t={4} />
            <path d="M1326 186H1371V198L1357 211H1353V306H1344V211H1340L1326 198Z" fill="#666" />
          </Art>
        </div>
        <div className="-mt-[8px] ml-[17px] flex h-[8px] w-[241px] justify-between border-b-2 border-[#c8c8c8]">
          {Array.from({ length: 9 }, (_, i) => <span key={i} className="h-[7px] w-[3px] bg-[#c8c8c8]" />)}
        </div>
      </div>
      <Art g={J} x={1876} y={961} w={46} h={61} className="ml-auto">
        <Gear cx={226} cy={241} r={28} fill="#808080" />
      </Art>
    </div>
  );
}

export default function App() {
  return (
    <div className="h-[1024px] w-[1924px] overflow-hidden bg-white p-[2px] font-['Liberation_Sans',Arial,sans-serif]">
      <div className="flex h-[29px] items-center bg-[#f3f3f3]">
        <Art g={A} x={2} y={2} w={24} h={29}>
          <path d="M22 18H66L69 21V66H22Z" fill="#ff7a18" /><path d="M16 25L22 18V78L16 72Z" fill="#c9520a" /><path d="M16 60H69V74L64 78H22L16 73Z" fill="#7c3207" />
          <text x="36" y="50" fontSize="29" fontWeight="700" fill="#fff" fontFamily="Liberation Sans, sans-serif">F</text>
          <text x="33" y="73" fontSize="10" fontWeight="700" fill="#ffd4b5" fontFamily="Liberation Sans, sans-serif">FUS</text>
        </Art>
        <span className="ml-[4px] text-[14.5px] tracking-[-0.085px] text-black font-['Open_Sans','Noto_Sans',sans-serif]">bottle bottom v1* (ME) - Autodesk Fusion (Education License)</span>
        <Art g={D} x={1743} y={2} w={60} h={29} className="ml-auto"><path d="M1098 47H1134" stroke="#000" strokeWidth="3" /></Art>
        <Art g={D} x={1803} y={2} w={59} h={29}><rect x="1273.500" y="38" width="26" height="27" rx="4" stroke="#000" strokeWidth="3" /><path d="M1279 32H1298Q1306 33 1306 41V60" stroke="#000" strokeWidth="3" /></Art>
        <Art g={D} x={1862} y={2} w={60} h={29}><path d="M1449 31L1484 66M1484 31L1449 66" stroke="#000" strokeWidth="3" /></Art>
      </div>
      <TopBar />
      <Ribbon />
      <div className="flex h-[783px]">
        <div className="flex w-[813px] flex-col justify-between">
          <Browser />
          <div className="mb-[6px] ml-[5px] flex h-[31px] w-[374px] items-center border border-b-2 border-[#c8c8c8] bg-[#f1f1f1]">
            <span className="ml-[30px] mt-[1px] text-[13.6px] text-[#666]">COMMENTS</span>
            <Art g={H} x={350} y={924} w={30} h={28} className="ml-auto">
              <circle cx="1084" cy="86" r="17" fill="#333" /><path d="M1074 86H1094M1084 76V96" stroke="#eee" strokeWidth="5" />
            </Art>
          </div>
        </div>
        <div className="flex w-[296px] flex-col">
          <Bottle />
          <NavBar />
        </div>
        <div className="flex flex-1 flex-col justify-between">
          <ViewCube />
          <Art g={J} x={1876} y={924} w={46} h={36} className="ml-auto">
            <path d="M229 60A31 31 0 0 0 229 122H260V91A31 31 0 0 0 229 60Z" fill="#050505" />
            <path d="M211 102L232 82M220 102L243 78M232 94L245 84M233 102L245 96" stroke="#fff" strokeWidth="3" />
          </Art>
        </div>
      </div>
      <Timeline />
    </div>
  );
}
